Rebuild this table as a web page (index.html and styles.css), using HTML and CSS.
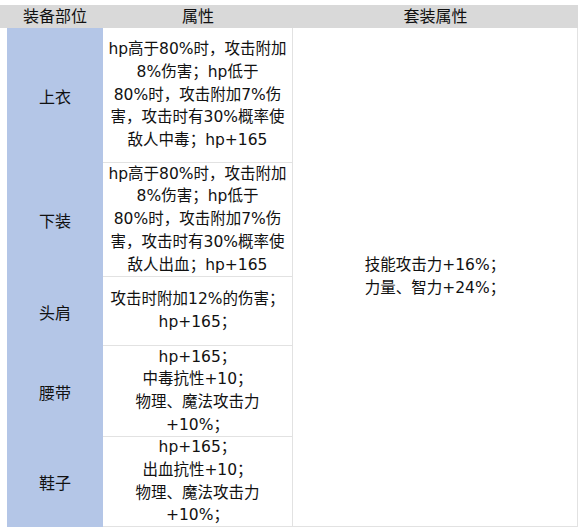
FILE: index.html
```html
<!DOCTYPE html>
<html lang="zh">
<head>
<meta charset="utf-8">
<link rel="stylesheet" href="styles.css">
</head>
<body>
<div class="sheet">
  <div class="head">
    <div class="hcell">装备部位</div>
    <div class="hcell">属性</div>
    <div class="hcell">套装属性</div>
  </div>
  <div class="body">
    <div class="part r1"><p>上衣</p></div>
    <div class="attr r1"><p>hp高于80%时<span class="fw">，</span>攻击附加<br>8%伤害<span class="fw">；</span>hp低于<br>80%时<span class="fw">，</span>攻击附加7%伤<br>害<span class="fw">，</span>攻击时有30%概率使<br>敌人中毒<span class="fw">；</span>hp+165</p></div>
    <div class="set"><p>技能攻击力+16%<span class="fw">；</span><br>力量、智力+24%<span class="fw">；</span></p></div>
    <div class="part r2"><p>下装</p></div>
    <div class="attr r2"><p>hp高于80%时<span class="fw">，</span>攻击附加<br>8%伤害<span class="fw">；</span>hp低于<br>80%时<span class="fw">，</span>攻击附加7%伤<br>害<span class="fw">，</span>攻击时有30%概率使<br>敌人出血<span class="fw">；</span>hp+165</p></div>
    <div class="part r3"><p>头肩</p></div>
    <div class="attr r3"><p>攻击时附加12%的伤害<span class="fw">；</span><br>hp+165<span class="fw">；</span></p></div>
    <div class="part r4"><p>腰带</p></div>
    <div class="attr r4"><p>hp+165<span class="fw">；</span><br>中毒抗性+10<span class="fw">；</span><br>物理、魔法攻击力<br>+10%<span class="fw">；</span></p></div>
    <div class="part r5"><p>鞋子</p></div>
    <div class="attr r5"><p>hp+165<span class="fw">；</span><br>出血抗性+10<span class="fw">；</span><br>物理、魔法攻击力<br>+10%<span class="fw">；</span></p></div>
  </div>
</div>
</body>
</html>
```
FILE: styles.css
```css
html, body {
  margin: 0;
  padding: 0;
  background: #ffffff;
}
p {
  margin: 0;
}
.sheet {
  padding-top: 5px;
  width: 578px;
  font-family: "DejaVu Sans", "Noto Sans CJK SC", sans-serif;
  font-size: 15.5px;
  color: #111;
}
.fw {
  font-family: "Noto Sans CJK SC", sans-serif;
  line-height: 0;
}
.head {
  display: grid;
  grid-template-columns: 96px 190px 285px;
  padding-left: 7px;
  height: 23px;
  background: #d9d9d9;
  align-items: center;
  font-size: 16px;
}
.hcell {
  text-align: center;
  line-height: 23px;
}
.body {
  display: grid;
  grid-template-columns: 96px 190px 285px;
  grid-template-rows: 135px 114px 69px 91px 90px;
  margin-left: 7px;
}
.part {
  grid-column: 1;
  background: #b4c6e7;
  display: flex;
  align-items: center;
  justify-content: center;
  font-size: 16px;
}
.attr {
  grid-column: 2;
  display: flex;
  align-items: center;
  justify-content: center;
  text-align: center;
  line-height: 22.7px;
  border-right: 1px solid #e2e2e2;
  border-bottom: 1px solid #e2e2e2;
  white-space: nowrap;
}
.r1 { grid-row: 1; }
.r2 { grid-row: 2; }
.r3 { grid-row: 3; }
.r4 { grid-row: 4; }
.r5 { grid-row: 5; }
.set {
  grid-column: 3;
  grid-row: 1 / -1;
  display: flex;
  align-items: center;
  justify-content: center;
  text-align: left;
  line-height: 23px;
  border-right: 1px solid #e2e2e2;
  border-bottom: 1px solid #e2e2e2;
}
```
